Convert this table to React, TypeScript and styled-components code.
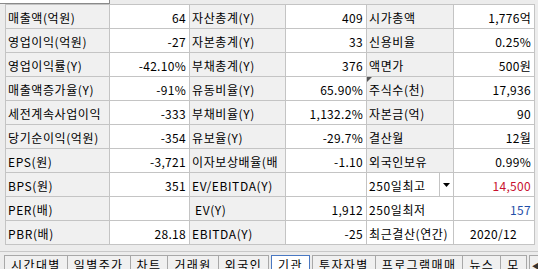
import * as React from "react";
import styled, { createGlobalStyle } from "styled-components";

const GlobalStyle = createGlobalStyle`
  html, body {
    margin: 0;
    padding: 0;
  }
  body {
    background: #ececec;
    font-family: "Noto Sans CJK KR", "Noto Sans", sans-serif;
    font-size: 12px;
    color: #000;
    overflow: hidden;
  }
`;

type Cell = {
  text: string;
  color?: string;
  align?: "left" | "right" | "center";
  indent?: boolean;
  white?: boolean;
  drop?: boolean;
  mark?: boolean;
};

type RowData = [Cell, Cell, Cell, Cell, Cell, Cell];

const RED = "#c8102e";
const BLUE = "#1f4fa8";

const rows: RowData[] = [
  [{ text: "매출액(억원)" }, { text: "64" }, { text: "자산총계(Y)" }, { text: "409" }, { text: "시가총액" }, { text: "1,776억" }],
  [{ text: "영업이익(억원)" }, { text: "-27" }, { text: "자본총계(Y)" }, { text: "33" }, { text: "신용비율" }, { text: "0.25%" }],
  [{ text: "영업이익률(Y)" }, { text: "-42.10%" }, { text: "부채총계(Y)" }, { text: "376" }, { text: "액면가" }, { text: "500원" }],
  [{ text: "매출액증가율(Y)" }, { text: "-91%" }, { text: "유동비율(Y)" }, { text: "65.90%" }, { text: "주식수(천)", mark: true }, { text: "17,936" }],
  [{ text: "세전계속사업이익" }, { text: "-333" }, { text: "부채비율(Y)" }, { text: "1,132.2%" }, { text: "자본금(억)" }, { text: "90" }],
  [{ text: "당기순이익(억원)" }, { text: "-354" }, { text: "유보율(Y)" }, { text: "-29.7%" }, { text: "결산월" }, { text: "12월" }],
  [{ text: "EPS(원)" }, { text: "-3,721" }, { text: "이자보상배율(배" }, { text: "-1.10" }, { text: "외국인보유" }, { text: "0.99%" }],
  [{ text: "BPS(원)" }, { text: "351" }, { text: "EV/EBITDA(Y)" }, { text: "" }, { text: "250일최고", white: true, drop: true }, { text: "14,500", color: RED }],
  [{ text: "PER(배)" }, { text: "" }, { text: "EV(Y)", indent: true }, { text: "1,912" }, { text: "250일최저", white: true }, { text: "157", color: BLUE }],
  [{ text: "PBR(배)" }, { text: "28.18" }, { text: "EBITDA(Y)" }, { text: "-25" }, { text: "최근결산(연간)", white: true }, { text: "2020/12", align: "center" }],
];

const widths = [104, 80, 96, 81, 87, 81];

const tabs = ["시간대별", "일별주가", "차트", "거래원", "외국인", "기관", "투자자별", "프로그램매매", "뉴스", "모"];

const Screen = styled.div`
  width: 538px;
  height: 269px;
  display: flex;
  flex-direction: column;
  overflow: hidden;
`;

const TopStrip = styled.div`
  height: 8px;
  display: flex;
  align-items: flex-start;
`;

const TopBox = styled.div`
  width: 109px;
  height: 3px;
  background: #fff;
  border-right: 1px solid #8a8a8a;
  border-bottom: 1px solid #8a8a8a;
`;

const Grid = styled.table`
  margin-left: 5px;
  border-collapse: collapse;
  table-layout: fixed;
  width: 530px;
  border-top: 1px solid #7a7a7a;
  border-left: 1px solid #7a7a7a;
`;

const Tr = styled.tr`
  height: 24px;
`;

const Label = styled.td<{ $white?: boolean; $indent?: boolean }>`
  position: relative;
  padding: 2px 0 0 ${(p) => (p.$indent ? 5 : 2)}px;
  background: ${(p) => (p.$white ? "#ffffff" : "#f0f0f0")};
  border: 1px solid #c4c4c4;
  white-space: nowrap;
  overflow: hidden;
  letter-spacing: 0.6px;
`;

const Value = styled.td<{ $align: string; $color: string }>`
  padding: 2px 3px 0 2px;
  background: #fff;
  border: 1px solid #c4c4c4;
  text-align: ${(p) => p.$align};
  color: ${(p) => p.$color};
  white-space: nowrap;
  overflow: hidden;
  letter-spacing: 0.3px;
`;

const DropButton = styled.span`
  position: absolute;
  right: 0;
  top: 0;
  bottom: 0;
  width: 13px;
  border-left: 1px solid #c4c4c4;
  display: flex;
  align-items: center;
  justify-content: center;
  background: #fff;
`;

const Mark = styled.span`
  position: absolute;
  left: 0;
  top: 0;
  width: 0;
  height: 0;
  border-top: 5px solid #555;
  border-right: 5px solid transparent;
`;

const TabArea = styled.div`
  margin-top: 6px;
  border-top: 1px solid #c8c8c8;
  padding: 3px 0 0 5px;
  display: flex;
  align-items: flex-start;
`;

const Tab = styled.div<{ $active?: boolean }>`
  height: 18px;
  padding: 1px 6px 0;
  border: 1px solid ${(p) => (p.$active ? "#4a78c2" : "#a8a8a8")};
  border-bottom: none;
  margin-right: ${(p) => (p.$active ? 3 : 0)}px;
  margin-left: ${(p) => (p.$active ? 2 : -1)}px;
  background: ${(p) => (p.$active ? "#fff" : "#f0f0f0")};
  white-space: nowrap;
  line-height: 16px;
  letter-spacing: 1.4px;
`;

const Arrows = styled.div`
  display: flex;
  margin-left: 2px;
`;

const ArrowBtn = styled.div`
  width: 12px;
  height: 18px;
  border: 1px solid #a8a8a8;
  background: #f0f0f0;
  display: flex;
  align-items: center;
  justify-content: center;
  font-size: 8px;
  color: #333;
`;

export default function App(): React.ReactElement {
  return (
    <Screen>
      <GlobalStyle />
      <TopStrip>
        <TopBox />
      </TopStrip>
      <Grid>
        <colgroup>
          {widths.map((w, i) => (
            <col key={i} style={{ width: w }} />
          ))}
        </colgroup>
        <tbody>
          {rows.map((r, ri) => (
            <Tr key={ri}>
              {r.map((c, ci) =>
                ci % 2 === 0 ? (
                  <Label key={ci} $white={c.white} $indent={c.indent}>
                    {c.mark ? <Mark /> : null}
                    {c.text}
                    {c.drop ? (
                      <DropButton>
                        <svg width="7" height="4" viewBox="0 0 7 4">
                          <path d="M0 0h7L3.5 4z" fill="#000" />
                        </svg>
                      </DropButton>
                    ) : null}
                  </Label>
                ) : (
                  <Value key={ci} $align={c.align || "right"} $color={c.color || "#000"}>
                    {c.text}
                  </Value>
                )
              )}
            </Tr>
          ))}
        </tbody>
      </Grid>
      <TabArea>
        {tabs.map((t) => (
          <Tab key={t} $active={t === "기관"}>
            {t}
          </Tab>
        ))}
        <Arrows>
          <ArrowBtn>◀</ArrowBtn>
          <ArrowBtn>▶</ArrowBtn>
        </Arrows>
      </TabArea>
    </Screen>
  );
}
